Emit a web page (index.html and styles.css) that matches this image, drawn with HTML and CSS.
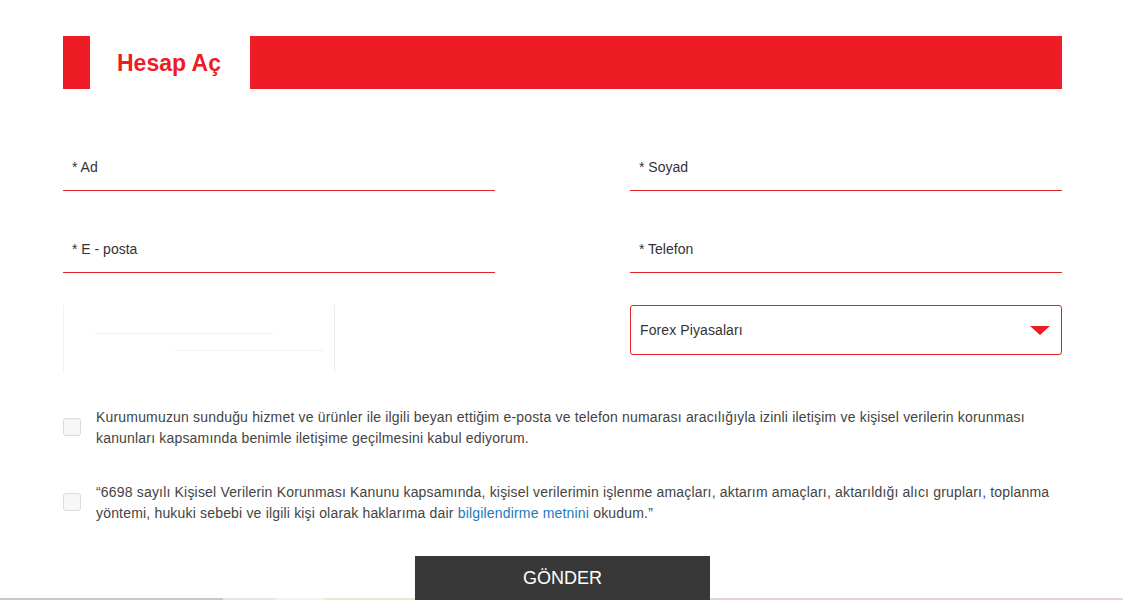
FILE: index.html
```html
<!DOCTYPE html>
<html lang="tr">
<head>
<meta charset="utf-8">
<title>Hesap Aç</title>
<link rel="stylesheet" href="styles.css">
</head>
<body>
<div class="page">
  <div class="heading">
    <div class="heading-left"></div>
    <h1 class="heading-title">Hesap Aç</h1>
    <div class="heading-bar"></div>
  </div>

  <form class="form">
    <div class="grid">
      <input class="field" type="text" placeholder="* Ad">
      <input class="field" type="text" placeholder="* Soyad">
    </div>
    <div class="grid grid-2">
      <input class="field" type="text" placeholder="* E - posta">
      <input class="field" type="text" placeholder="* Telefon">
    </div>
    <div class="grid grid-3">
      <div class="captcha">
        <div class="cap-line cap-a"></div>
        <div class="cap-line cap-b"></div>
      </div>
      <div class="select">
        <span class="select-text">Forex Piyasaları</span>
        <svg class="select-arrow" width="20" height="9" viewBox="0 0 20 9"><path d="M0 0 H20 L10 9 Z" fill="#ee1c25"/></svg>
      </div>
    </div>

    <div class="consent consent-1">
      <span class="check"></span>
      <p class="consent-text">Kurumumuzun sunduğu hizmet ve ürünler ile ilgili beyan ettiğim e-posta ve telefon numarası aracılığıyla izinli iletişim ve kişisel verilerin korunması kanunları kapsamında benimle iletişime geçilmesini kabul ediyorum.</p>
    </div>
    <div class="consent consent-2">
      <span class="check"></span>
      <p class="consent-text">“6698 sayılı Kişisel Verilerin Korunması Kanunu kapsamında, kişisel verilerimin işlenme amaçları, aktarım amaçları, aktarıldığı alıcı grupları, toplanma yöntemi, hukuki sebebi ve ilgili kişi olarak haklarıma dair <a class="link" href="#">bilgilendirme metnini</a> okudum.”</p>
    </div>

    <div class="actions">
      <button class="submit" type="button">GÖNDER</button>
    </div>
  </form>
</div>
<div class="strip"></div>
</body>
</html>
```

FILE: styles.css
```css
html, body {
  margin: 0;
  padding: 0;
  background: #fff;
}
body {
  font-family: "Liberation Sans", Arial, sans-serif;
  color: #333;
  overflow: hidden;
}
.page {
  width: 999px;
  margin-left: 63px;
  padding-top: 36px;
}
.heading {
  display: flex;
  height: 53px;
}
.heading-left {
  width: 27px;
  background: #ee1c25;
}
.heading-title {
  width: 160px;
  box-sizing: border-box;
  margin: 0;
  padding-left: 27px;
  font-size: 23px;
  font-weight: bold;
  line-height: 54px;
  color: #ee1c25;
}
.heading-bar {
  flex: 1;
  background: #ee1c25;
}
.form {
  padding-top: 56px;
}
.grid {
  display: grid;
  grid-template-columns: 432px 432px;
  column-gap: 135px;
}
.grid-2 { margin-top: 36px; }
.grid-3 { margin-top: 32px; align-items: start; }
.field {
  display: block;
  width: 100%;
  box-sizing: border-box;
  height: 46px;
  border: 0;
  border-bottom: 1px solid #e2242c;
  padding: 0 9px 2px;
  font-family: inherit;
  font-size: 14px;
  color: #333;
  background: transparent;
  outline: none;
}
.field::placeholder {
  color: #333;
  opacity: 1;
}
.captcha {
  position: relative;
  width: 272px;
  height: 67px;
  box-sizing: border-box;
  border-left: 1px solid #f3f3f3;
  border-right: 1px solid #ececec;
  background: #fff;
}
.cap-line {
  position: absolute;
  height: 1px;
  background: #f2f2f2;
}
.cap-a { left: 30px; top: 28px; width: 180px; }
.cap-b { left: 110px; top: 45px; width: 150px; }
.select {
  display: flex;
  align-items: center;
  justify-content: space-between;
  height: 50px;
  box-sizing: border-box;
  border: 1px solid #e8202a;
  border-radius: 3px;
  padding: 0 11px 0 9px;
  font-size: 14px;
  color: #333;
}
.select-text { letter-spacing: 0.1px; }
.select-arrow { display: block; margin-top: 1px; }
.consent {
  display: flex;
  align-items: center;
}
.consent-1 { margin-top: 35px; }
.consent-2 { margin-top: 33px; }
.check {
  flex: none;
  width: 18px;
  height: 18px;
  box-sizing: border-box;
  border: 1px solid #dcdcdc;
  border-radius: 3px;
  background: #f7f7f7;
  margin-right: 15px;
  margin-top: -3px;
}
.consent-text {
  margin: 0;
  font-size: 14px;
  line-height: 21px;
  letter-spacing: 0.18px;
  color: #444;
}
.link {
  color: #1d79c0;
  text-decoration: none;
}
.actions {
  display: flex;
  justify-content: center;
  margin-top: 32px;
}
.submit {
  position: relative;
  z-index: 1;
  width: 295px;
  height: 46px;
  border: 0;
  background: #383838;
  color: #fff;
  font-family: inherit;
  font-size: 18px;
  padding: 0 0 2px;
  cursor: pointer;
}
.strip {
  height: 2px;
  margin-top: -4px;
  background: linear-gradient(to right, #c8c8c8 0, #c8c8c8 223px, #ebe6dc 223px, #ebe6dc 276px, #f7f4f0 276px, #f7f4f0 324px, #efe6d6 324px, #efe6d6 709px, #e6d4d4 709px, #e6d4d4 100%);
}
```
